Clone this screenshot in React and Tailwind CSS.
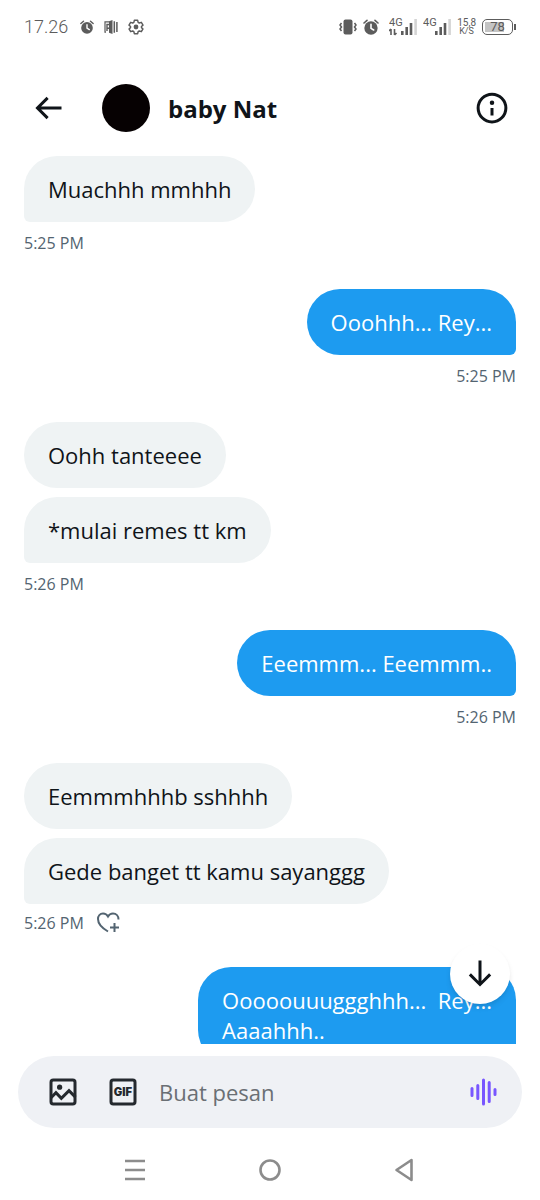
import { clsx } from 'clsx'

const THREAD = [
  { from: 'them', time: '5:25 PM', texts: ['Muachhh mmhhh'] },
  { from: 'me', time: '5:25 PM', texts: ['Ooohhh... Rey...'] },
  { from: 'them', time: '5:26 PM', texts: ['Oohh tanteeee', '*mulai remes tt km'] },
  { from: 'me', time: '5:26 PM', texts: ['Eeemmm... Eeemmm..'] },
  { from: 'them', time: '5:26 PM', texts: ['Eemmmhhhb sshhhh', 'Gede banget tt kamu sayanggg'], canReact: true },
  { from: 'me', texts: ['Ooooouuuggghhh...  Rey...\nAaaahhh..'] },
]

function AlarmIcon({ className }) {
  return (
    <svg viewBox="0 0 24 24" className={className} aria-hidden="true">
      <circle cx="12" cy="13.5" r="10" fill="currentColor" />
      <path d="M1.5 6L6 2M22.5 6L18 2" stroke="currentColor" strokeWidth="2.4" strokeLinecap="round" />
      <path d="M12 8v6l4 2.5" stroke="#fff" strokeWidth="2.4" fill="none" strokeLinecap="round" />
    </svg>
  )
}

function Signal({ data }) {
  return (
    <svg viewBox="0 0 28 20" className="h-5 w-7" aria-hidden="true">
      <text x="0" y="9" fontSize="11" fontFamily="Roboto, sans-serif" fill="currentColor">4G</text>
      {data && (
        <path d="M2 18v-6M0 14l2-2M5.500 12v6M7.500 16l-2 2" stroke="currentColor" strokeWidth="1.600" fill="none" />
      )}
      <path d="M13.300 18v-4M17.700 18v-8M22 18V6" stroke="currentColor" strokeWidth="2.600" />
      <path d="M26.600 18V2" stroke="#d4d4d4" strokeWidth="2.600" />
    </svg>
  )
}

function StatusBar() {
  return (
    <div className="flex h-[54px] shrink-0 items-center justify-between px-6 font-['Roboto',sans-serif] text-[#5c5c5c]">
      <div className="flex items-center gap-2.5">
        <span className="mr-0.5 text-lg font-light">17.26</span>
        <AlarmIcon className="h-3.5 w-3.5" />
        <svg viewBox="0 0 14 14" className="h-3.5 w-3.5" aria-hidden="true">
          <path d="M8.500 0v14L5 12.800V1.200z" fill="currentColor" />
          <path d="M5 1.800H1v10.400h1" stroke="currentColor" strokeWidth="1.200" fill="none" />
          <path d="M3 11V4.500h1.500a1.800 1.800 0 010 3.700H3" stroke="currentColor" strokeWidth="1.400" fill="none" />
          <path d="M10.300 1.200v11.600M12.900 2v10" stroke="currentColor" strokeWidth="1.500" />
        </svg>
        <svg viewBox="0 0 24 24" className="h-4 w-4" aria-hidden="true">
          <path
            d="M9.500 2h5l.7 3 1.800 1 3-1 2.500 4.200-2.300 2v1.700l2.300 2L20 19l-3-1-1.800 1-.7 3h-5l-.7-3L7 18l-3 1-2.500-4.100 2.300-2v-1.700l-2.300-2L4 5l3 1 1.800-1z"
            stroke="currentColor" strokeWidth="2.200" fill="none" strokeLinejoin="round"
          />
          <circle cx="12" cy="12" r="3.600" fill="currentColor" />
        </svg>
      </div>
      <div className="flex items-center gap-1.5">
        <svg viewBox="0 0 18 16" className="h-4 w-[18px]" aria-hidden="true">
          <rect x="4.500" y="0.500" width="9" height="15" rx="2" fill="currentColor" />
          <path d="M2.500 4L1 6l1.500 2L1 10l1.500 2M15.500 4L17 6l-1.500 2 1.500 2-1.500 2" stroke="currentColor" strokeWidth="1.500" fill="none" />
        </svg>
        <AlarmIcon className="mr-1 h-4 w-4" />
        <Signal data />
        <Signal />
        <div className="flex flex-col items-center text-[10px] leading-[9px]">
          <span>15,8</span>
          <span className="text-[9px]">K/S</span>
        </div>
        <div className="flex items-center gap-px">
          <div className="flex h-4 w-[31px] items-center rounded-[5px] border border-current p-0.5">
            <div className="flex h-full w-full items-center justify-center bg-linear-to-r from-[#c4c4c4] from-78% to-white to-78% text-[13px]">
              78
            </div>
          </div>
          <div className="h-1.5 w-0.5 bg-current" />
        </div>
      </div>
    </div>
  )
}

function ChatHeader() {
  return (
    <header className="flex h-[102px] shrink-0 items-start px-[30px] pt-[30px]">
      <button type="button" aria-label="Kembali" className="flex h-12 items-center">
        <svg viewBox="0 0 24 24" className="h-9 w-9" fill="currentColor">
          <path d="M7.414 13l5.043 5.040-1.414 1.420L3.586 12l7.457-7.460 1.414 1.420L7.414 11H21v2H7.414z" />
        </svg>
      </button>
      <div className="ml-9 h-12 w-12 rounded-full bg-[#060102]" />
      <h1 className="ml-[18px] flex-1 text-2xl leading-[50px] font-bold">baby Nat</h1>
      <button type="button" aria-label="Info percakapan" className="flex h-12 items-center">
        <svg viewBox="0 0 24 24" className="h-9 w-9" fill="currentColor">
          <circle cx="12" cy="12" r="9.250" fill="none" stroke="currentColor" strokeWidth="2" />
          <circle cx="12" cy="8.500" r="1.500" />
          <path d="M11 12h2v5h-2z" />
        </svg>
      </button>
    </header>
  )
}

function HeartPlus() {
  return (
    <button type="button" aria-label="Beri reaksi" className="ml-3">
      <svg viewBox="0 0 24 24" className="h-6 w-6" fill="none" stroke="currentColor" strokeWidth="2">
        <path d="M12 20.500C6 17 2 12.500 2 8c0-3 2-5.500 5-5.500 2.200 0 4 1.200 5 3 1-1.800 2.800-3 5-3 3.200 0 5.500 2.500 5.500 6" />
        <path d="M18.500 12v9M14 16.500h9" />
      </svg>
    </button>
  )
}

function MessageGroup({ from, time, texts, canReact }) {
  const mine = from === 'me'
  return (
    <section className={clsx('flex shrink-0 flex-col', mine ? 'items-end' : 'items-start')}>
      <div className={clsx('flex flex-col gap-[9px]', mine ? 'items-end' : 'items-start')}>
        {texts.map((text, i) => (
          <p
            key={text}
            className={clsx(
              'rounded-[33px] px-6 py-[18px] text-[22px] leading-[30px] whitespace-pre-wrap',
              mine ? 'bg-[#1d9bf0] text-white' : 'bg-[#eff3f4]',
              i === texts.length - 1 && (mine ? 'rounded-br-md' : 'rounded-bl-md')
            )}
          >
            {text}
          </p>
        ))}
      </div>
      {time && (
        <div className={clsx('flex items-center text-base text-[#536471]', canReact ? 'h-[38px]' : 'h-[42px]')}>
          <time>{time}</time>
          {canReact && <HeartPlus />}
        </div>
      )}
    </section>
  )
}

function Composer() {
  return (
    <form className="mx-[18px] mt-3 flex h-[72px] shrink-0 items-center rounded-full bg-[#eff1f5] pr-[25px] pl-[27px]">
      <button type="button" aria-label="Tambah foto" className="text-[#24292e]">
        <svg viewBox="0 0 24 24" className="h-9 w-9" fill="none" stroke="currentColor" strokeWidth="2">
          <rect x="4" y="4" width="16" height="16" rx="1.500" />
          <path d="M4 15.800l3.300-3.400 3.600 3.800 5.100-5.100 4.300 4.300" />
          <circle cx="9.750" cy="8.750" r="1.750" fill="currentColor" stroke="none" />
        </svg>
      </button>
      <button type="button" aria-label="Tambah GIF" className="ml-6 text-[#24292e]">
        <svg viewBox="0 0 24 24" className="h-9 w-9">
          <rect x="4" y="4" width="16" height="16" rx="1.500" fill="none" stroke="currentColor" strokeWidth="2" />
          <text x="12" y="14.700" textAnchor="middle" fontSize="7.500" fontWeight="900" fontFamily="Inter, sans-serif" fill="currentColor">GIF</text>
        </svg>
      </button>
      <input
        type="text"
        aria-label="Buat pesan"
        placeholder="Buat pesan"
        className="ml-[18px] min-w-0 flex-1 bg-transparent text-[22px] outline-none placeholder:text-[#6a6f74]"
      />
      <button type="button" aria-label="Pesan suara" className="text-[#7856ff]">
        <svg viewBox="0 0 27 28" className="h-7 w-[27px]" stroke="currentColor" strokeWidth="3" strokeLinecap="round">
          <path d="M2 10.500v7M7.800 7.500v13M13.500 2v24M19.200 4.500v19M25 11.500v5" />
        </svg>
      </button>
    </form>
  )
}

function SystemNav() {
  return (
    <nav className="mt-3 flex h-[60px] shrink-0 items-center justify-center gap-[110px] text-[#8c8c8c]">
      <button type="button" aria-label="Aplikasi terbaru">
        <svg viewBox="0 0 24 24" className="h-6 w-6" stroke="currentColor" strokeWidth="2.700">
          <path d="M1 3h20M1 12h20M1 21h20" />
        </svg>
      </button>
      <button type="button" aria-label="Beranda">
        <svg viewBox="0 0 24 24" className="h-6 w-6" fill="none" stroke="currentColor" strokeWidth="2.600">
          <circle cx="12" cy="12" r="9.500" />
        </svg>
      </button>
      <button type="button" aria-label="Kembali ke aplikasi sebelumnya">
        <svg viewBox="0 0 24 24" className="h-6 w-6" fill="none" stroke="currentColor" strokeWidth="2.600" strokeLinejoin="round">
          <path d="M19.500 2v20L4.500 12z" />
        </svg>
      </button>
    </nav>
  )
}

export default function App() {
  return (
    <div className="flex h-screen flex-col bg-white font-['Open_Sans',sans-serif] text-[#0f1419]">
      <StatusBar />
      <ChatHeader />
      <div className="relative flex min-h-0 flex-1 flex-col">
        <main className="flex min-h-0 flex-1 flex-col gap-[25px] overflow-hidden px-6">
          {THREAD.map((group, i) => (
            <MessageGroup key={i} {...group} />
          ))}
        </main>
        <button
          type="button"
          aria-label="Ke pesan terbaru"
          className="absolute right-[30px] bottom-10 flex h-[60px] w-[60px] items-center justify-center rounded-full bg-white shadow-md"
        >
          <svg viewBox="0 0 24 24" className="h-9 w-9" fill="currentColor">
            <path d="M13 3v13.590l5.040-5.050 1.420 1.420L12 20.410l-7.460-7.450 1.420-1.420L11 16.590V3h2z" />
          </svg>
        </button>
      </div>
      <Composer />
      <SystemNav />
    </div>
  )
}
